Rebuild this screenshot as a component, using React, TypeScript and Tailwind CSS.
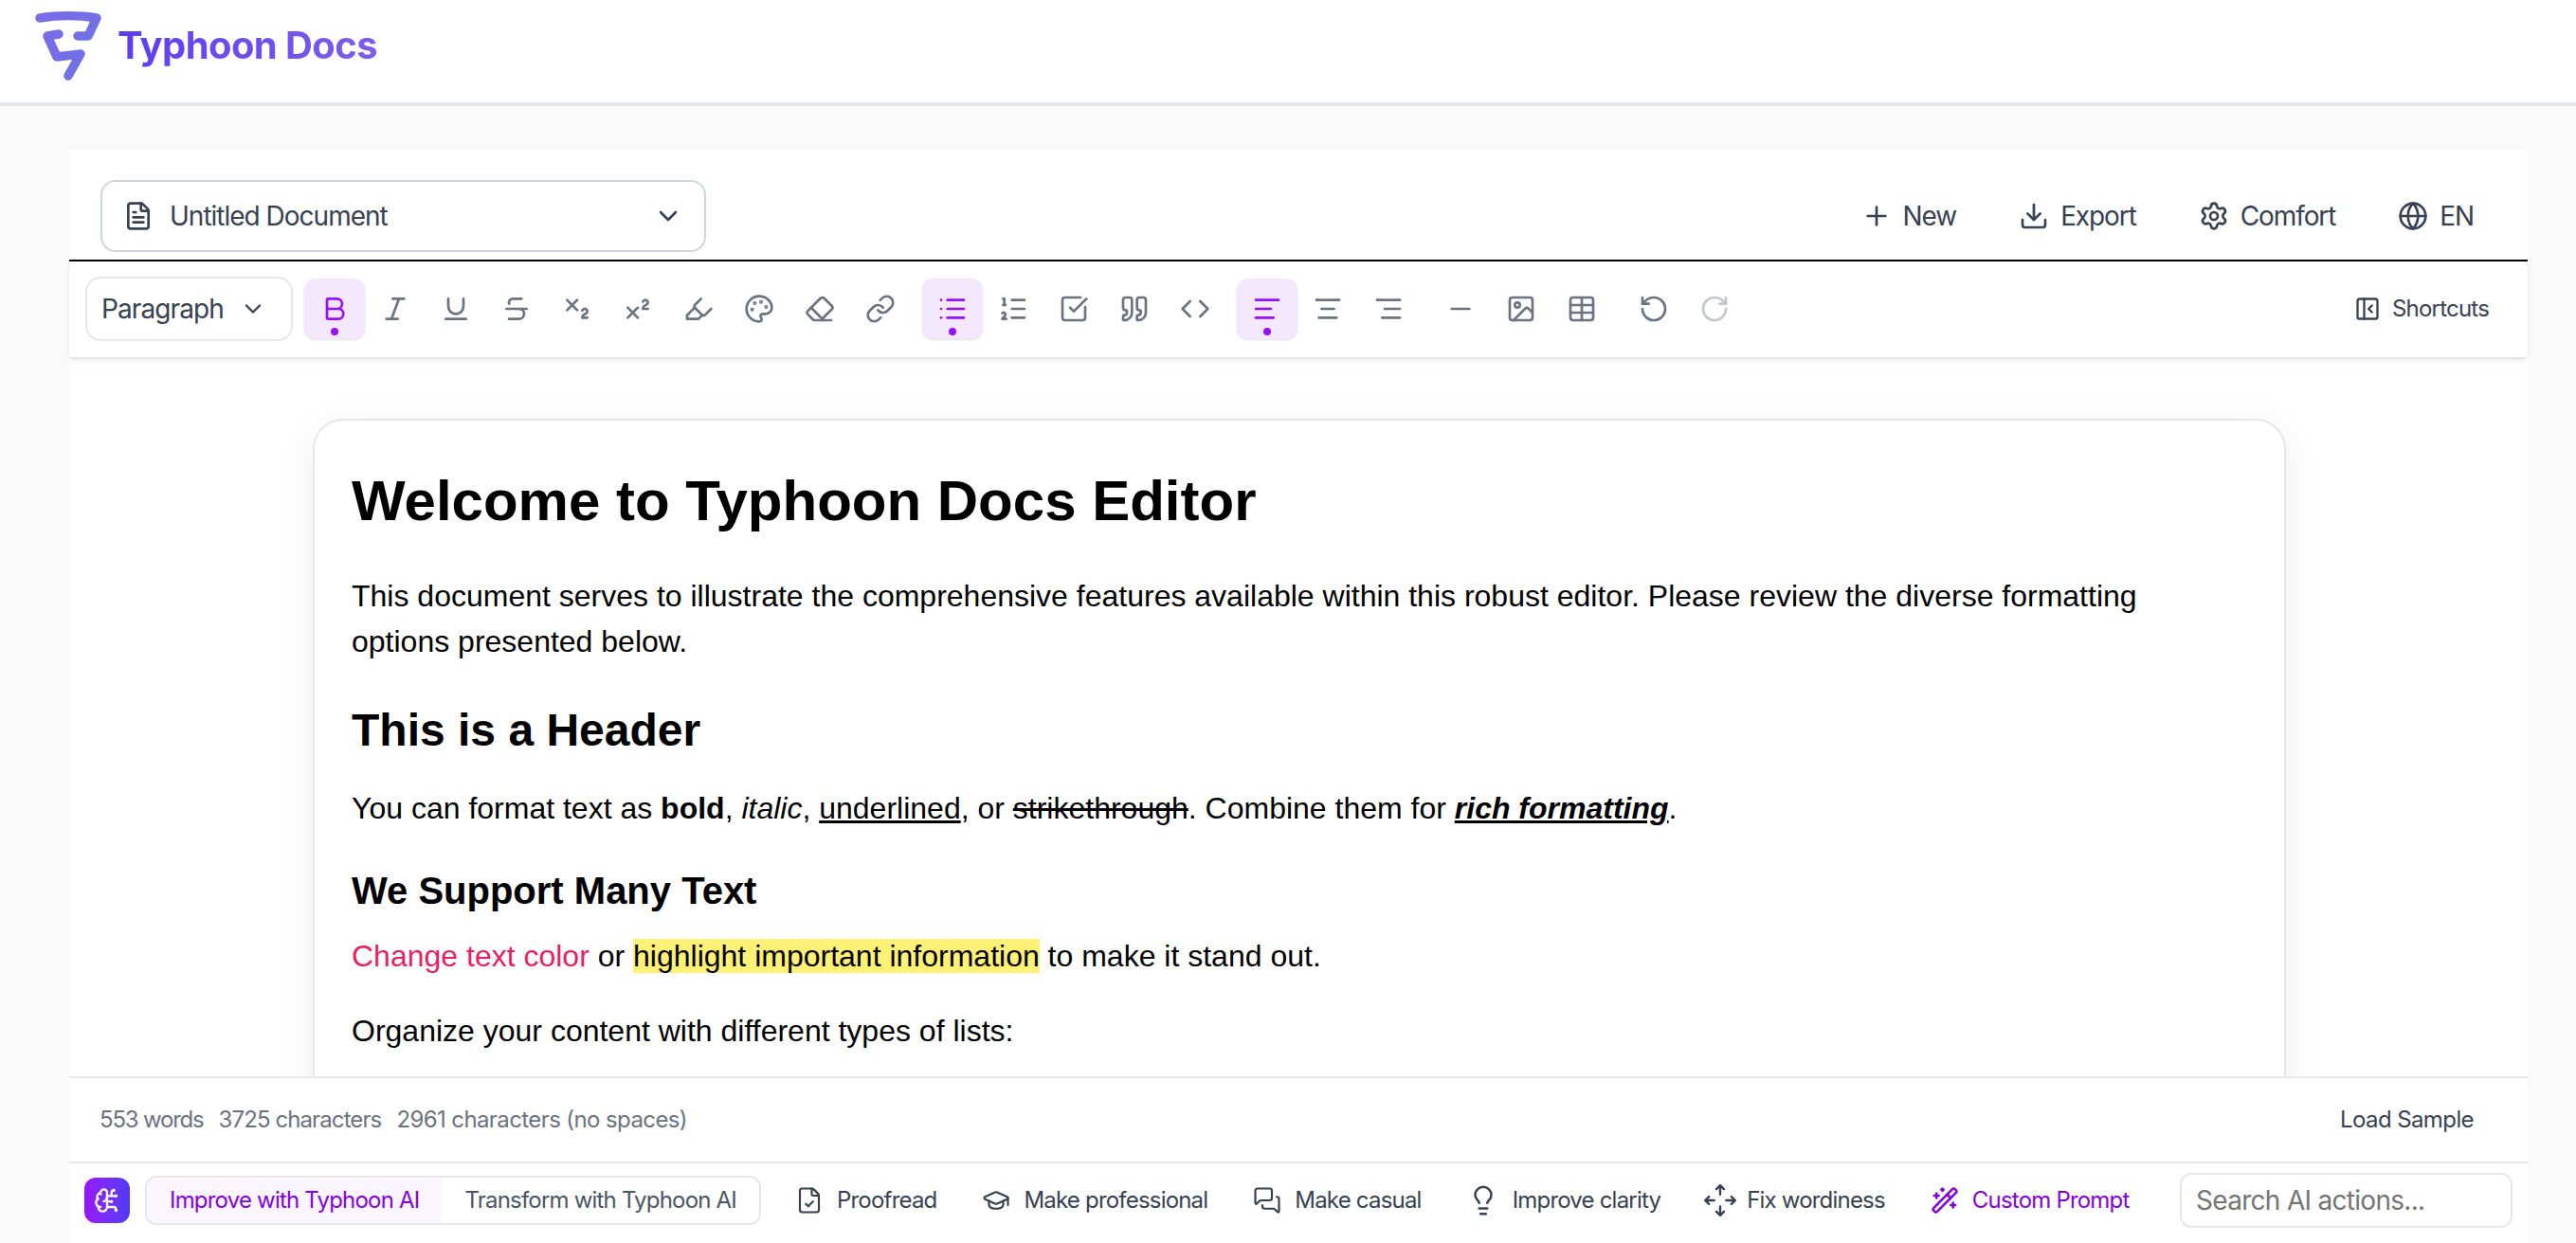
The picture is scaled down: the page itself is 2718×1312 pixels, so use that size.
import {
  AlignCenter, AlignLeft, AlignRight, Bold, BrainCircuit, ChevronDown, Code, Download, Eraser, FileCheck, FileText,
  Globe, GraduationCap, Highlighter, Image, Italic, Lightbulb, Link, List, ListOrdered, MessagesSquare, Minus,
  PanelLeftClose, Palette, Plus, Quote, RotateCcw, RotateCw, Settings, SquareCheckBig, Strikethrough, Subscript,
  Superscript, Table, Underline, WandSparkles,
} from 'lucide-react';
import type { ComponentType } from 'react';

type IconType = ComponentType<{ size?: number; className?: string; strokeWidth?: number }>;

function Logo() {
  return (
    <svg width="80" height="80" viewBox="0 0 80 80" className="shrink-0" fill="none">
      <defs>
        <linearGradient id="logo" x1="0" y1="0" x2="1" y2="1">
          <stop offset="0" stopColor="#7a6be8" />
          <stop offset="1" stopColor="#6f72e4" />
        </linearGradient>
      </defs>
      <path d="M8 11 C26 8 50 8 68 11 L59 30 L48 30" stroke="url(#logo)" strokeWidth="9.500" strokeLinecap="round" strokeLinejoin="round" />
      <path d="M28 28 L16 30 L26 52 L51 49 L38 72" stroke="url(#logo)" strokeWidth="9.500" strokeLinecap="round" strokeLinejoin="round" />
    </svg>
  );
}

function ToolButton({ icon: Icon, active, disabled }: { icon: IconType; active?: boolean; disabled?: boolean }) {
  return (
    <button
      className={
        active
          ? 'relative flex h-16 w-16 items-center justify-center rounded-xl bg-purple-100 text-purple-600 shadow-sm'
          : disabled
            ? 'relative flex h-16 w-16 items-center justify-center rounded-xl text-[#c4c7cc]'
            : 'relative flex h-16 w-16 items-center justify-center rounded-xl text-[#6b7280]'
      }
    >
      <Icon size={32} />
      {active && <span className="absolute bottom-1 left-[28px] h-2 w-2 rounded-full bg-purple-600" />}
    </button>
  );
}

function HeaderAction({ icon: Icon, label }: { icon: IconType; label: string }) {
  return (
    <button className="flex items-center gap-3 text-[28px] tracking-[-1.1px] text-[#374151]">
      <Icon size={32} />
      {label}
    </button>
  );
}

function AiAction({
  icon: Icon,
  label,
  accent,
  size = 30,
  iconClass = 'shrink-0',
}: {
  icon: IconType;
  label: string;
  accent?: boolean;
  size?: number;
  iconClass?: string;
}) {
  return (
    <button
      className={
        accent
          ? 'flex shrink-0 items-center gap-[14px] whitespace-nowrap text-[24px] tracking-[-0.8px] text-purple-700'
          : 'flex shrink-0 items-center gap-[14px] whitespace-nowrap text-[24px] tracking-[-0.8px] text-[#374151]'
      }
    >
      <Icon size={size} className={iconClass} strokeWidth={accent ? 2 : 1.75} />
      {label}
    </button>
  );
}

function MoveApart({ size, className }: { size?: number; className?: string }) {
  return (
    <svg width={size} height={size} viewBox="0 0 24 24" fill="none" stroke="currentColor" strokeWidth="1.500" strokeLinecap="round" strokeLinejoin="round" className={className}>
      <path d="M12 2v6M9.500 4.500 12 2l2.500 2.500M12 16v6M9.500 19.500 12 22l2.500-2.500M2 12h6M4.500 9.500 2 12l2.500 2.500M16 12h6M19.500 9.500 22 12l-2.500 2.500" />
    </svg>
  );
}

export default function App() {
  return (
    <div className="h-[1312px] w-full overflow-hidden bg-[#fafafa] font-['Inter',sans-serif]">
      <header className="flex h-[112px] items-start gap-[10px] border-b-4 border-[#e5e7eb] bg-white pl-[34px] pt-[8px]">
        <Logo />
        <span className="mt-[16px] bg-gradient-to-r from-[#5b3df0] to-[#7f5ce8] bg-clip-text text-[40px] font-bold leading-[48px] tracking-[-0.6px] text-transparent">Typhoon Docs</span>
      </header>

      <main className="ml-[73px] mt-[46px] flex h-[1154px] w-[2594px] flex-col bg-white">
        <div className="flex h-[118px] shrink-0 items-center justify-between border-b-2 border-black pl-[33px] pr-[57px] pt-[23px]">
          <button className="flex h-[76px] w-[639px] items-center justify-between rounded-2xl border-2 border-[#d1d5db] pl-[22px] pr-[22px] text-[28px] tracking-[-1px] text-[#374151]">
            <span className="flex items-center gap-[17px]">
              <FileText size={32} />
              Untitled Document
            </span>
            <ChevronDown size={32} />
          </button>
          <div className="flex items-center gap-[66px]">
            <HeaderAction icon={Plus} label="New" />
            <HeaderAction icon={Download} label="Export" />
            <HeaderAction icon={Settings} label="Comfort" />
            <HeaderAction icon={Globe} label="EN" />
          </div>
        </div>

        <div className="z-10 flex h-[101px] shrink-0 items-center gap-3 bg-white pb-[1px] pl-[17px] pr-[41px] shadow-md">
          <button className="flex h-[68px] w-[219px] items-center justify-between rounded-2xl border-2 border-[#e5e7eb] pl-[15px] pr-[26px] text-[28px] tracking-[-0.9px] text-[#374151]">
            Paragraph
            <ChevronDown size={28} />
          </button>
          <div className="flex">
            <ToolButton icon={Bold} active />
            <ToolButton icon={Italic} />
            <ToolButton icon={Underline} />
            <ToolButton icon={Strikethrough} />
            <ToolButton icon={Subscript} />
            <ToolButton icon={Superscript} />
            <ToolButton icon={Highlighter} />
            <ToolButton icon={Palette} />
            <ToolButton icon={Eraser} />
            <ToolButton icon={Link} />
          </div>
          <div className="flex">
            <ToolButton icon={List} active />
            <ToolButton icon={ListOrdered} />
            <ToolButton icon={SquareCheckBig} />
            <ToolButton icon={Quote} />
            <ToolButton icon={Code} />
          </div>
          <div className="flex">
            <ToolButton icon={AlignLeft} active />
            <ToolButton icon={AlignCenter} />
            <ToolButton icon={AlignRight} />
          </div>
          <div className="flex">
            <ToolButton icon={Minus} />
            <ToolButton icon={Image} />
            <ToolButton icon={Table} />
          </div>
          <div className="flex">
            <ToolButton icon={RotateCcw} />
            <ToolButton icon={RotateCw} disabled />
          </div>
          <button className="ml-auto flex items-center gap-3 text-[24px] tracking-[-0.8px] text-[#374151]">
            <PanelLeftClose size={28} />
            Shortcuts
          </button>
        </div>

        <div className="min-h-0 flex-1 overflow-hidden bg-white pl-[257px] pr-[255px] pt-[65px]">
          <article className="h-[1000px] rounded-[32px] border-2 border-[#e5e7eb] bg-white pl-[39px] pr-[80px] pt-[49px] font-['Liberation_Sans',Arial,sans-serif] text-[32px] leading-[48px] text-black shadow-[0_8px_40px_rgba(0,0,0,0.07)]">
            <h1 className="mb-[40px] text-[60px] font-bold leading-[72px]">Welcome to Typhoon Docs Editor</h1>
            <p>
              This document serves to illustrate the comprehensive features available within this robust editor. Please review the diverse formatting options presented below.
            </p>
            <h2 className="mb-[28px] mt-[40px] text-[48px] font-bold leading-[60px]">This is a Header</h2>
            <p>
              You can format text as <strong>bold</strong>, <em>italic</em>, <u>underlined</u>, or <s>strikethrough</s>. Combine them for{' '}
              <strong><em><u>rich formatting</u></em></strong>.
            </p>
            <h3 className="mb-[19px] mt-[37px] text-[40px] font-bold leading-[52px]">We Support Many Text</h3>
            <p className="mb-[31px]">
              <span className="text-[#e91e63]">Change text color</span> or <mark className="bg-[#fff176] text-black">highlight important information</mark> to make it stand out.
            </p>
            <p>Organize your content with different types of lists:</p>
          </article>
        </div>

        <div className="flex h-[90px] shrink-0 items-center justify-between border-t-2 border-[#e5e7eb] bg-white pl-8 pr-[57px]">
          <div className="flex gap-4 text-[24px] text-[#6b7280]">
            <span className="tracking-[-1.2px]">553 words</span>
            <span className="tracking-[-0.9px]">3725 characters</span>
            <span className="tracking-[-0.6px]">2961 characters (no spaces)</span>
          </div>
          <button className="text-[24px] tracking-[-0.6px] text-[#374151]">Load Sample</button>
        </div>

        <div className="flex h-[86px] shrink-0 items-center border-t-2 border-[#e5e7eb] bg-white pb-[6px] pl-4 pr-4">
          <div className="flex h-12 w-12 shrink-0 items-center justify-center rounded-xl bg-gradient-to-r from-purple-600 to-indigo-600 text-white">
            <BrainCircuit size={28} />
          </div>
          <div className="ml-4 flex h-[52px] shrink-0 items-stretch overflow-hidden whitespace-nowrap rounded-xl border-2 border-[#e5e7eb] text-[24px] tracking-[-0.8px]">
            <button className="bg-purple-50 px-6 text-purple-700">Improve with Typhoon AI</button>
            <button className="px-6 text-[#4b5563]">Transform with Typhoon AI</button>
          </div>
          <div className="ml-9 flex items-center gap-12">
            <AiAction icon={FileCheck} label="Proofread" />
            <AiAction icon={GraduationCap} label="Make professional" />
            <AiAction icon={MessagesSquare} label="Make casual" />
            <AiAction icon={Lightbulb} label="Improve clarity" size={34} />
            <AiAction icon={MoveApart} label="Fix wordiness" size={38} iconClass="-ml-[4px] -mr-[5px] shrink-0" />
            <AiAction icon={WandSparkles} label="Custom Prompt" accent />
          </div>
          <input
            placeholder="Search AI actions..."
            className="ml-auto h-[58px] w-[351px] shrink-0 rounded-xl border-2 border-[#e5e7eb] pl-[15px] pr-4 text-[28px] tracking-[-0.7px] placeholder:text-[#757575]"
          />
        </div>
      </main>
    </div>
  );
}
